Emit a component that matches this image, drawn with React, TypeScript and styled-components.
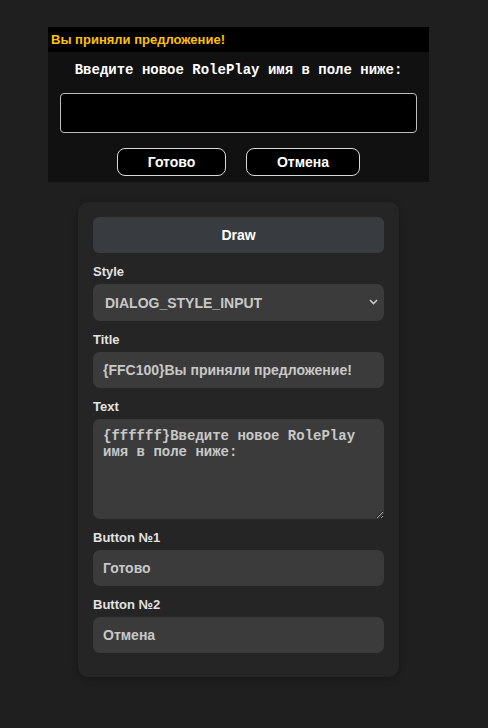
import React, { useState } from 'react';
import styled, { createGlobalStyle } from 'styled-components';

const GlobalStyle = createGlobalStyle`
  html, body {
    margin: 0;
    padding: 0;
    background: #1f1f1f;
    font-family: "Liberation Sans", Arial, sans-serif;
  }
`;

const Page = styled.div`
  width: 477px;
  padding: 27px 0 40px;
  display: flex;
  flex-direction: column;
  align-items: center;
  gap: 20px;
`;

const Dialog = styled.div`
  width: 381px;
  background: #111111;
`;

const DialogHeader = styled.div`
  height: 25px;
  line-height: 25px;
  background: #000;
  color: #ffc100;
  font-weight: bold;
  font-size: 13px;
  padding-left: 3px;
`;

const DialogBody = styled.div`
  display: flex;
  flex-direction: column;
  align-items: center;
  padding: 9px 12px 6px;
`;

const DialogText = styled.div`
  font-family: "Liberation Mono", "Courier New", monospace;
  font-weight: bold;
  font-size: 14px;
  line-height: 18px;
  color: #fff;
  text-align: center;
  white-space: pre-wrap;
`;

const DialogInput = styled.input`
  box-sizing: border-box;
  width: 100%;
  height: 40px;
  margin-top: 14px;
  background: #000;
  border: 1px solid #bdbdbd;
  border-radius: 4px;
  color: #fff;
  outline: none;
`;

const DialogButtons = styled.div`
  display: flex;
  gap: 20px;
  margin-top: 15px;
`;

const DialogButton = styled.button<{ $w: number }>`
  width: ${(p) => p.$w}px;
  height: 28px;
  background: #000;
  border: 1px solid #d9d9d9;
  border-radius: 8px;
  color: #fff;
  font-family: "Liberation Sans", Arial, sans-serif;
  font-weight: bold;
  font-size: 14px;
  cursor: pointer;
`;

const Panel = styled.div`
  box-sizing: border-box;
  width: 321px;
  padding: 15px 15px 24px;
  background: #252525;
  border-radius: 10px;
  box-shadow: 0 2px 6px rgba(0, 0, 0, 0.25);
`;

const DrawButton = styled.button`
  width: 100%;
  height: 36px;
  background: #383b40;
  border: none;
  border-radius: 6px;
  color: #fff;
  font-family: "Liberation Sans", Arial, sans-serif;
  font-weight: bold;
  font-size: 14px;
  cursor: pointer;
`;

const Field = styled.div`
  margin-top: 10px;
`;

const Label = styled.label`
  display: block;
  margin-bottom: 4px;
  line-height: 17px;
  font-size: 13px;
  font-weight: bold;
  color: #e2e2e2;
`;

const controlBase = `
  box-sizing: border-box;
  display: block;
  width: 100%;
  background: #3b3b3b;
  border: none;
  border-radius: 7px;
  color: #c8c8c8;
  font-weight: bold;
  font-size: 14px;
  outline: none;
`;

const TextInput = styled.input`
  ${controlBase}
  height: 36px;
  padding: 0 10px;
  font-family: "Liberation Sans", Arial, sans-serif;
`;

const SelectWrap = styled.div`
  position: relative;
`;

const Select = styled.select`
  ${controlBase}
  height: 37px;
  padding: 0 12px;
  appearance: none;
  font-family: "Liberation Sans", Arial, sans-serif;
`;

const Chevron = styled.svg`
  position: absolute;
  right: 6px;
  top: 15px;
  pointer-events: none;
`;

const TextArea = styled.textarea`
  ${controlBase}
  height: 100px;
  padding: 9px 10px;
  margin-bottom: 3px;
  font-family: "Liberation Mono", "Courier New", monospace;
  font-size: 14px;
  line-height: 16px;
  resize: vertical;
`;

export default function App() {
  const [title, setTitle] = useState('{FFC100}Вы приняли предложение!');
  const [text, setText] = useState('{ffffff}Введите новое RolePlay имя в поле ниже:');
  const [btn1, setBtn1] = useState('Готово');
  const [btn2, setBtn2] = useState('Отмена');

  return (
    <>
      <GlobalStyle />
      <Page>
        <Dialog>
          <DialogHeader>Вы приняли предложение!</DialogHeader>
          <DialogBody>
            <DialogText>Введите новое RolePlay имя в поле ниже:</DialogText>
            <DialogInput />
            <DialogButtons>
              <DialogButton $w={109}>{btn1}</DialogButton>
              <DialogButton $w={114}>{btn2}</DialogButton>
            </DialogButtons>
          </DialogBody>
        </Dialog>

        <Panel>
          <DrawButton>Draw</DrawButton>
          <Field>
            <Label>Style</Label>
            <SelectWrap>
              <Select defaultValue="DIALOG_STYLE_INPUT">
                <option>DIALOG_STYLE_MSGBOX</option>
                <option>DIALOG_STYLE_INPUT</option>
                <option>DIALOG_STYLE_LIST</option>
                <option>DIALOG_STYLE_PASSWORD</option>
              </Select>
              <Chevron width="9" height="6" viewBox="0 0 9 6">
                <path d="M1 1l3.5 3.5L8 1" fill="none" stroke="#c8c8c8" strokeWidth="1.6" />
              </Chevron>
            </SelectWrap>
          </Field>
          <Field>
            <Label>Title</Label>
            <TextInput value={title} onChange={(e) => setTitle(e.target.value)} />
          </Field>
          <Field>
            <Label>Text</Label>
            <TextArea value={text} onChange={(e) => setText(e.target.value)} />
          </Field>
          <Field>
            <Label>Button №1</Label>
            <TextInput value={btn1} onChange={(e) => setBtn1(e.target.value)} />
          </Field>
          <Field>
            <Label>Button №2</Label>
            <TextInput value={btn2} onChange={(e) => setBtn2(e.target.value)} />
          </Field>
        </Panel>
      </Page>
    </>
  );
}
